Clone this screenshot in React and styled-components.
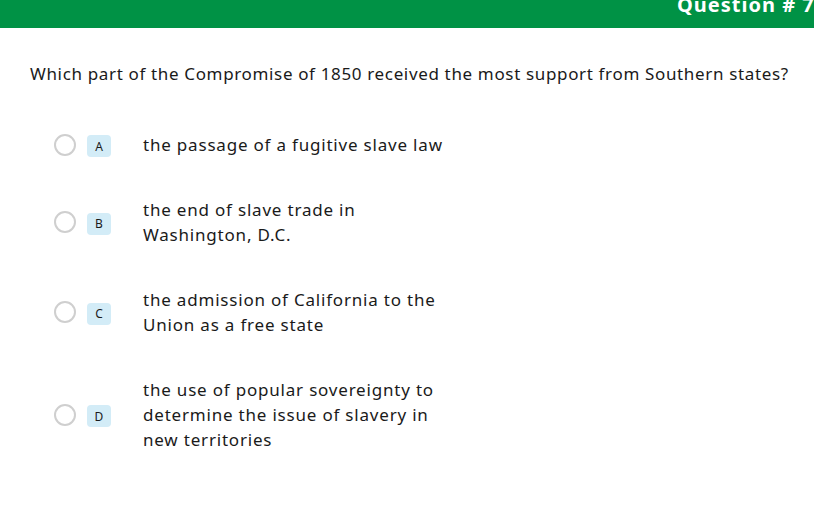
import React from 'react'
import styled, { createGlobalStyle } from 'styled-components'

const Global = createGlobalStyle`
  html, body { margin: 0; padding: 0; background: #fff; }
  body { font-family: "Noto Sans", "Open Sans", sans-serif; color: #1a1a1a; overflow: hidden; }
`

const options = [
  { key: 'A', text: 'the passage of a fugitive slave law' },
  { key: 'B', text: 'the end of slave trade in Washington, D.C.' },
  { key: 'C', text: 'the admission of California to the Union as a free state' },
  { key: 'D', text: 'the use of popular sovereignty to determine the issue of slavery in new territories' },
]

export default function App() {
  return (
    <>
      <Global />
      <Page>
        <Header>
          <Title>Question # 7</Title>
          <Bubble />
        </Header>
        <Question>Which part of the Compromise of 1850 received the most support from Southern states?</Question>
        <List>
          {options.map(o => (
            <Row key={o.key}>
              <Radio />
              <Badge>{o.key}</Badge>
              <Answer>{o.text}</Answer>
            </Row>
          ))}
        </List>
      </Page>
    </>
  )
}

const Page = styled.div`
  width: 814px;
  height: 512px;
  overflow: hidden;
`

const Header = styled.div`
  position: relative;
  height: 28px;
  background: #009245;
  display: flex;
  align-items: flex-end;
  padding-left: 677px;
`

const Title = styled.div`
  color: #fff;
  font-weight: 700;
  font-size: 20px;
  line-height: 20px;
  letter-spacing: 1px;
  white-space: nowrap;
  margin-bottom: 13px;
`

const Bubble = styled.div`
  position: absolute;
  right: -14px;
  top: -10px;
  width: 42px;
  height: 42px;
  border-radius: 50%;
  background: #eeeeee;
  z-index: -1;
`

const Question = styled.p`
  margin: 34px 0 0 30px;
  font-size: 17px;
  line-height: 24px;
  letter-spacing: 0.65px;
  white-space: nowrap;
`

const List = styled.div`
  display: flex;
  flex-direction: column;
  gap: 40px;
  margin-top: 46px;
`

const Row = styled.div`
  display: flex;
  align-items: center;
  padding-left: 54px;
`

const Radio = styled.span`
  width: 22px;
  height: 22px;
  border: 2px solid #cfcfcf;
  border-radius: 50%;
  box-sizing: border-box;
  flex-shrink: 0;
`

const Badge = styled.span`
  margin-left: 11px;
  margin-top: 3px;
  width: 24px;
  height: 22px;
  border-radius: 4px;
  background: #d3ecf7;
  display: flex;
  align-items: center;
  justify-content: center;
  font-size: 12px;
  flex-shrink: 0;
`

const Answer = styled.div`
  margin-left: 32px;
  width: 310px;
  font-size: 17px;
  line-height: 25px;
  letter-spacing: 0.8px;
`
